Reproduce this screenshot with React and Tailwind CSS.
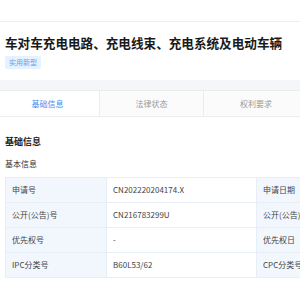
export default function App() {
  const font = { fontFamily: '"Noto Sans CJK SC", "Noto Sans", sans-serif' };
  const rows = [
    ["申请号", "CN202220204174.X", "申请日期"],
    ["公开(公告)号", "CN216783299U", "公开(公告)日"],
    ["优先权号", "-", "优先权日"],
    ["IPC分类号", "B60L53/62", "CPC分类号"],
  ];
  return (
    <div className="w-[300px] h-[300px] overflow-hidden bg-white" style={font}>
      <div className="h-[22px] border-b border-[#eeeeee]" />
      <div className="px-[5px] pt-[12px] flex flex-col items-start">
        <div className="text-[12.6px] leading-[18px] font-bold text-[#1a1a1a] whitespace-nowrap">
          车对车充电电路、充电线束、充电系统及电动车辆
        </div>
        <div className="mt-[4px] flex h-[13px] items-center px-[4px] bg-[#e6f2ff] text-[#5aa3f3] text-[7px] leading-[13px] rounded-[2px]">
          实用新型
        </div>
      </div>
      <div className="mt-[11px] h-[11px] bg-[#f5f6f9] border-b border-[#ececec]" />
      <div className="flex h-[26px] border-b border-[#ececec] ml-[-4px] w-[320px]">
        <div className="w-[104px] flex items-center justify-center text-[8px] text-[#3a8ef0] bg-white border-r border-[#ececec]">基础信息</div>
        <div className="w-[104px] flex items-center justify-center text-[8px] text-[#999999] bg-[#fbfbfc] border-r border-[#ececec]">法律状态</div>
        <div className="w-[104px] flex items-center justify-center text-[8px] text-[#999999] bg-[#fbfbfc]">权利要求</div>
      </div>
      <div className="px-[5px]">
        <div className="mt-[18px] text-[9px] leading-[14px] font-bold text-[#222222]">基础信息</div>
        <div className="mt-[9px] text-[8px] leading-[12px] text-[#333333]">基本信息</div>
        <div className="mt-[7px] w-[330px] border-t border-l border-[#e8eef5]">
          {rows.map((r, i) => (
            <div key={i} className="flex h-[25px] border-b border-[#e8eef5] text-[8px] text-[#444444]">
              <div className="w-[101px] shrink-0 flex items-center pl-[6px] bg-[#f1f7fd] border-r border-[#e8eef5]">{r[0]}</div>
              <div className="w-[150px] shrink-0 flex items-center pl-[6px] bg-white border-r border-[#e8eef5]">{r[1]}</div>
              <div className="flex-1 flex items-center pl-[6px] bg-[#f1f7fd] whitespace-nowrap">{r[2]}</div>
            </div>
          ))}
        </div>
      </div>
    </div>
  );
}
